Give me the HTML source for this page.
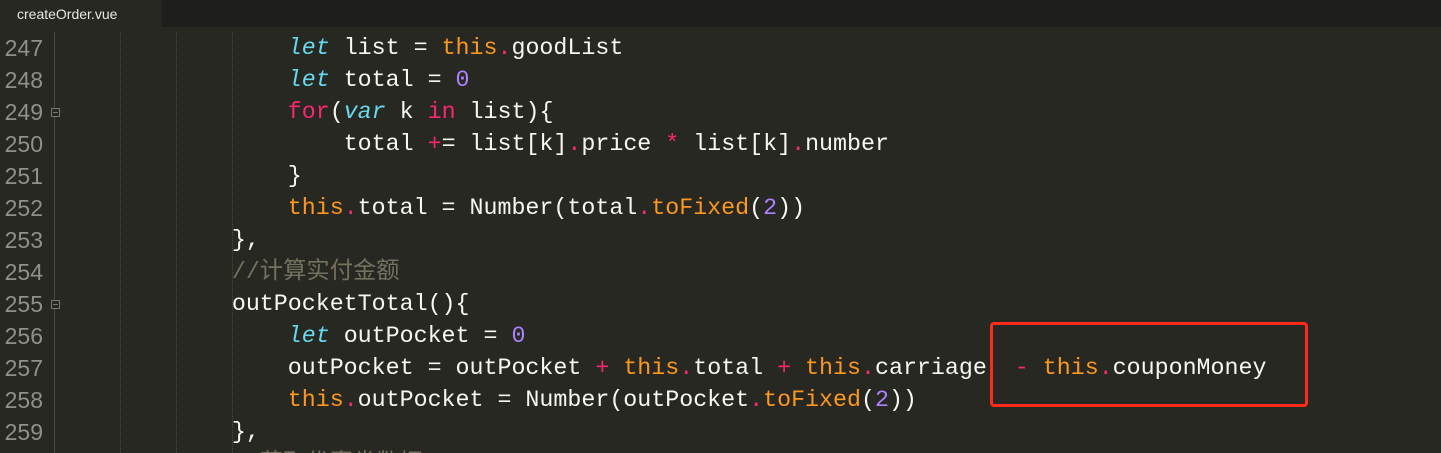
<!DOCTYPE html>
<html><head><meta charset="utf-8"><style>
*{margin:0;padding:0;box-sizing:border-box}
html{width:1441px;height:453px;overflow:hidden;background:#272822}
body{width:1441px;height:453px;overflow:hidden;background:#272822;position:relative;font-family:"Liberation Mono","DejaVu Sans Mono","Noto Sans CJK SC",monospace}
.tabbar{position:absolute;left:0;top:0;width:1441px;height:27px;background:#1e1f1c}
.tab{position:absolute;left:0;top:0;width:162px;height:27px;background:#272822;color:#e6e6e6;font:14px "Liberation Sans",sans-serif;line-height:28px;padding-left:17px}
.ln{position:absolute;left:0;width:43px;text-align:right;color:#8f908a;font:23px "Liberation Sans",sans-serif;height:32px;line-height:32px}
.l{position:absolute;left:120px;height:32px;line-height:32px;font-size:23.3px;color:#f8f8f2;white-space:pre}
.k{color:#66d9ef;font-style:italic}.t{color:#fd971f}.p{color:#f92672}.n{color:#ae81ff}.c{color:#75715e;font-family:"Liberation Mono","Noto Sans CJK SC",monospace}
.g{position:absolute;top:32px;height:421px;border-left:1px dotted #4a4a44}
.fold{position:absolute;left:51px;width:9px;height:9px;border:1px solid #777;background:#272822}
.fold:after{content:"";position:absolute;left:1px;top:3px;width:5px;height:1px;background:#777}
.box{position:absolute;left:990px;top:322px;width:318px;height:85px;border:3px solid #ff2a1a;border-radius:4px}
</style></head><body>
<div class="tabbar"><div class="tab">createOrder.vue</div></div>
<div class="g" style="left:54px;top:32px;height:421px;border-left:1px solid #4a4a44"></div>
<div class="g" style="left:120px"></div>
<div class="g" style="left:176px"></div>
<div class="g" style="left:232px"></div>
<div class="fold" style="top:108px"></div>
<div class="fold" style="top:300px"></div>
<div class="ln" style="top:32px">247</div>
<div class="ln" style="top:64px">248</div>
<div class="ln" style="top:96px">249</div>
<div class="ln" style="top:128px">250</div>
<div class="ln" style="top:160px">251</div>
<div class="ln" style="top:192px">252</div>
<div class="ln" style="top:224px">253</div>
<div class="ln" style="top:256px">254</div>
<div class="ln" style="top:288px">255</div>
<div class="ln" style="top:320px">256</div>
<div class="ln" style="top:352px">257</div>
<div class="ln" style="top:384px">258</div>
<div class="ln" style="top:416px">259</div>
<div class="l" style="top:32px">            <span class="k">let</span> list = <span class="t">this</span><span class="p">.</span>goodList</div>
<div class="l" style="top:64px">            <span class="k">let</span> total = <span class="n">0</span></div>
<div class="l" style="top:96px">            <span class="p">for</span>(<span class="k">var</span> k <span class="p">in</span> list){</div>
<div class="l" style="top:128px">                total <span class="p">+</span>= list[k]<span class="p">.</span>price <span class="p">*</span> list[k]<span class="p">.</span>number</div>
<div class="l" style="top:160px">            }</div>
<div class="l" style="top:192px">            <span class="t">this</span><span class="p">.</span>total = Number(total<span class="p">.</span><span class="t">toFixed</span>(<span class="n">2</span>))</div>
<div class="l" style="top:224px">        },</div>
<div class="l" style="top:256px">        <span class="c">//计算实付金额</span></div>
<div class="l" style="top:288px">        outPocketTotal(){</div>
<div class="l" style="top:320px">            <span class="k">let</span> outPocket = <span class="n">0</span></div>
<div class="l" style="top:352px">            outPocket = outPocket <span class="p">+</span> <span class="t">this</span><span class="p">.</span>total <span class="p">+</span> <span class="t">this</span><span class="p">.</span>carriage  <span class="p">-</span> <span class="t">this</span><span class="p">.</span>couponMoney</div>
<div class="l" style="top:384px">            <span class="t">this</span><span class="p">.</span>outPocket = Number(outPocket<span class="p">.</span><span class="t">toFixed</span>(<span class="n">2</span>))</div>
<div class="l" style="top:416px">        },</div>
<div class="l" style="top:448px">        <span class="c">//获取优惠券数据</span></div>
<div class="box"></div>
</body></html>
